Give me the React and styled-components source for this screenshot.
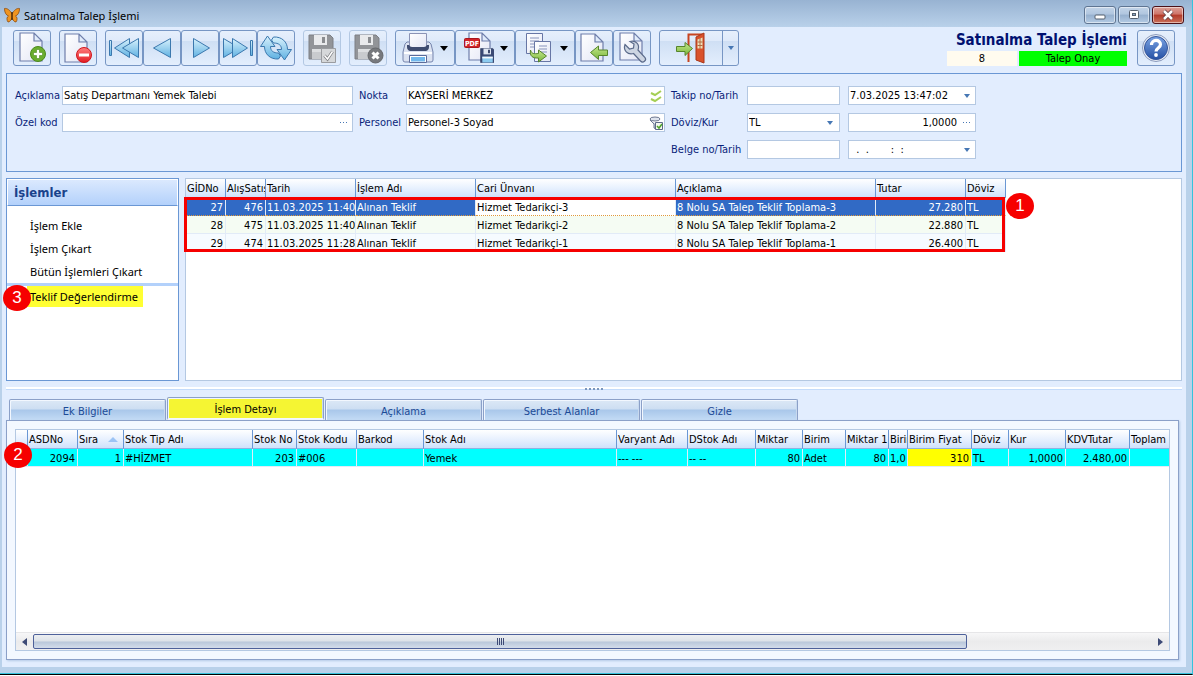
import React from "react";
import styled, { createGlobalStyle } from "styled-components";

const navy = "#0a1f7a";

// Data
const offerColumns = [
  { label: "GİDNo", width: 40, align: "right" },
  { label: "AlışSatış", width: 40, align: "right" },
  { label: "Tarih", width: 90 },
  { label: "İşlem Adı", width: 120 },
  { label: "Cari Ünvanı", width: 200 },
  { label: "Açıklama", width: 200 },
  { label: "Tutar", width: 90, align: "right" },
  { label: "Döviz", width: 40 }
];

const offerRows = [
  ["27", "476", "11.03.2025 11:40", "Alınan Teklif", "Hizmet Tedarikçi-3", "8 Nolu SA Talep Teklif Toplama-3", "27.280", "TL"],
  ["28", "475", "11.03.2025 11:40", "Alınan Teklif", "Hizmet Tedarikçi-2", "8 Nolu SA Talep Teklif Toplama-2", "22.880", "TL"],
  ["29", "474", "11.03.2025 11:28", "Alınan Teklif", "Hizmet Tedarikçi-1", "8 Nolu SA Talep Teklif Toplama-1", "26.400", "TL"]
];

const detailColumns = [
  { label: "", width: 12 },
  { label: "ASDNo", width: 50, align: "right" },
  { label: "Sıra", width: 46, align: "right", sorted: true },
  { label: "Stok Tip Adı", width: 129 },
  { label: "Stok No", width: 44, align: "right" },
  { label: "Stok Kodu", width: 60 },
  { label: "Barkod", width: 67 },
  { label: "Stok Adı", width: 193 },
  { label: "Varyant Adı", width: 71 },
  { label: "DStok Adı", width: 68 },
  { label: "Miktar", width: 47, align: "right" },
  { label: "Birim", width: 43 },
  { label: "Miktar 1", width: 43, align: "right" },
  { label: "Birim", width: 19 },
  { label: "Birim Fiyat", width: 64, align: "right", mark: true },
  { label: "Döviz", width: 37 },
  { label: "Kur", width: 57, align: "right" },
  { label: "KDVTutar", width: 64, align: "right" },
  { label: "Toplam", width: 41 }
];

const detailRow = [
  "", "2094", "1", "#HİZMET", "203", "#006", "", "Yemek", "--- ---", "-- --",
  "80", "Adet", "80", "1,0", "310", "TL", "1,0000", "2.480,00", ""
];

const tabs = ["Ek Bilgiler", "İşlem Detayı", "Açıklama", "Serbest Alanlar", "Gizle"];

// Icons
const Page = ({ x = 3, y = 1, w = 22, h = 28 }) => (
  <path
    d={`M${x} ${y}h${w - 8}l8 8v${h - 8}h-${w}z M${x + w - 8} ${y}v8h8`}
    fill="url(#paper)"
    stroke="#6f7eab"
    strokeWidth="1.2"
  />
);

const Floppy = ({ x = 0, y = 0, scale = 1, dark }) => (
  <g transform={`translate(${x} ${y}) scale(${scale})`}>
    <path d="M1 1h21l3 3v21H1z" fill={dark ? "#3a4a75" : "#929498"} stroke={dark ? "#26345a" : "#7d7f84"} />
    <path d="M6 1h13v10H6z" fill={dark ? "#dfe6f2" : "#e9eaec"} />
    <path d="M14 3h3v6h-3z" fill={dark ? "#26345a" : "#8a8c90"} />
    <path d="M4 15h18v10H4z" fill={dark ? "#8ccbf0" : "#c9cbce"} />
    <path d="M4 15h18v3H4z" fill={dark ? "#f3f7fc" : "#dddfe1"} />
  </g>
);

const GreenArrow = ({ d }) => <path d={d} fill="url(#green)" stroke="#56852c" strokeLinejoin="round" />;

const Svg = ({ children, size = 32 }) => (
  <svg width={size} height={size} viewBox={`0 0 ${size} ${size}`} aria-hidden="true">
    {children}
  </svg>
);

const Gradients = () => (
  <DefsSvg aria-hidden="true">
    <defs>
      <linearGradient id="paper" x2="1" y2="1">
        <stop offset="0" stopColor="#fff" />
        <stop offset="1" stopColor="#e3e6f5" />
      </linearGradient>
      <linearGradient id="blue" x2="0" y2="1">
        <stop offset="0" stopColor="#d8f1fc" />
        <stop offset="1" stopColor="#5fb1e2" />
      </linearGradient>
      <linearGradient id="green" x2="0" y2="1">
        <stop offset="0" stopColor="#c5e88c" />
        <stop offset="1" stopColor="#79b63c" />
      </linearGradient>
      <linearGradient id="red" x2="0" y2="1">
        <stop offset="0" stopColor="#ff7d7d" />
        <stop offset="1" stopColor="#e31b23" />
      </linearGradient>
      <linearGradient id="help" x2="0" y2="1">
        <stop offset="0" stopColor="#7ba4e4" />
        <stop offset="1" stopColor="#2450a4" />
      </linearGradient>
    </defs>
  </DefsSvg>
);

const icons = {
  add: (
    <Svg>
      <Page x={4} />
      <circle cx="22" cy="22" r="7.5" fill="#6aae2e" stroke="#4c8a1e" />
      <path d="M20.5 17.5h3v3h3v3h-3v3h-3v-3h-3v-3h3z" fill="#fff" stroke="#4c8a1e" strokeWidth=".6" />
    </Svg>
  ),
  remove: (
    <Svg>
      <Page x={3} y={2} />
      <circle cx="22" cy="23" r="7.5" fill="url(#red)" stroke="#d0161d" />
      <path d="M17 21.5h10v3H17z" fill="#fff" />
    </Svg>
  ),
  first: (
    <Svg>
      <g fill="url(#blue)" stroke="#3b78ae" strokeLinejoin="round">
        <path d="M1.5 8.5h2v15h-2z" />
        <path d="M21.5 6.5v19L6.5 16z" />
        <path d="M30.5 6.5v19L14.5 16z" />
      </g>
    </Svg>
  ),
  prev: (
    <Svg>
      <path d="M24.5 6.5v19L7.5 16z" fill="url(#blue)" stroke="#3b78ae" strokeLinejoin="round" />
    </Svg>
  ),
  next: (
    <Svg>
      <path d="M9.5 6.5v19L25.5 16z" fill="url(#blue)" stroke="#3b78ae" strokeLinejoin="round" />
    </Svg>
  ),
  last: (
    <Svg>
      <g fill="url(#blue)" stroke="#3b78ae" strokeLinejoin="round">
        <path d="M1.5 6.5v19L17.5 16z" />
        <path d="M10.5 6.5v19L25.5 16z" />
        <path d="M28.5 8.5h2v15h-2z" />
      </g>
    </Svg>
  ),
  refresh: (
    <Svg>
      <g fill="url(#blue)" stroke="#3b78ae" strokeLinejoin="round">
        <path d="M7.5 4L.5 14.5h4C4.5 22 10 27.5 18.5 27l2-3-2-3c-5 0-8-2-8-6.5h4.5z" />
        <path d="M24.5 28l7-10.5h-4C27.5 10 22 4.5 13.5 5l-2 3 2 3c5 0 8 2 8 6.5H17z" />
      </g>
    </Svg>
  ),
  save: (
    <Svg>
      <Floppy x={2} y={2} />
      <path d="M15.5 16.5h14v14h-14z" fill="#d6d8da" stroke="#9a9ca0" />
      <path d="M18.5 23.5l3 3.5 5-7.5" fill="none" stroke="#7c7e82" strokeWidth="3" />
      <path d="M18.5 23.5l3 3.5 5-7.5" fill="none" stroke="#fff" strokeWidth="1.5" />
    </Svg>
  ),
  cancel: (
    <Svg>
      <Floppy x={2} y={2} />
      <circle cx="23.5" cy="23.5" r="7.5" fill="#77797d" stroke="#66686c" />
      <path d="M20.5 20.5l6 6m0-6l-6 6" stroke="#fff" strokeWidth="3" />
    </Svg>
  ),
  print: (
    <Svg>
      <path d="M3 12l2-2h22l2 2 2 8v8q0 2-2 2H3q-2 0-2-2v-8z" fill="#dbe2f1" stroke="#7685ad" />
      <path d="M7.5 1.5h17v14h-17z" fill="url(#paper)" stroke="#8b93b5" />
      <path d="M5 13h2q1 2 3 2h12q2 0 3-2h2v2q0 3-3 4H8q-3-1-3-4z" fill="#3f4c70" />
      <path d="M2 21h28" stroke="#fff" strokeWidth="2" />
      <path d="M7.5 23.5h17v7h-17z" fill="#fff" stroke="#5c6b99" />
      <path d="M9 25h14v4.5H9z" fill="#72b8ec" />
    </Svg>
  ),
  pdf: (
    <Svg>
      <Page x={7} y={1} w={21} h={27} />
      <rect x="2.5" y="6.5" width="15" height="9" rx="1" fill="#d2242a" stroke="#a8161c" />
      <text x="10" y="14" textAnchor="middle" fontSize="7" fontWeight="700" fill="#fff">PDF</text>
      <Floppy x={18} y={16} scale={0.58} dark />
    </Svg>
  ),
  copy: (
    <Svg>
      <path d="M4.5 1.5h16v20h-16z" fill="url(#paper)" stroke="#6776a5" />
      <path d="M8 6h9M8 9h9M8 12h7M8 15h4" stroke="#8793bb" />
      <path d="M12.5 9.5h16v20h-16z" fill="url(#paper)" stroke="#6776a5" />
      <path d="M17 14h8M17 17h8M19 20h6" stroke="#8793bb" />
      <GreenArrow d="M8.5 18c1 4 4 4 8 3.500V18l8 6-8 6v-4c-6 .5-9-2-8-8z" />
    </Svg>
  ),
  back: (
    <Svg>
      <Page x={3} y={2} w={22} h={27} />
      <GreenArrow d="M12.5 20.5l8-6.500v4h9v5.500h-9v4z" />
    </Svg>
  ),
  wrench: (
    <Svg>
      <Page x={4} y={1} w={22} h={27} />
      <path
        d="M9 12.500l4.500 4.500 4-1 .5-4-4-2.500c6-1.500 10 3 8 8.500l7 7.500c2 3-2 6-4.500 3.500l-7-7.500c-6 1.500-10.500-3-8.500-9z"
        fill="#cdd5e2"
        stroke="#5b6a8a"
        strokeWidth="1.2"
      />
    </Svg>
  ),
  exit: (
    <Svg>
      <path d="M13.5 30V2.500h14" fill="none" stroke="#c8441f" strokeWidth="2" />
      <path d="M21 5l8-4v30l-8-3z" fill="#d9512b" stroke="#a9371a" />
      <path d="M22.5 7.500l5-2v11h-5z" fill="#ece0bb" />
      <path d="M25 6v11M22.500 10h5M22.500 13.500h5" stroke="#b3683e" />
      <GreenArrow d="M17.500 16.500l-7.500-6v4H1.500v5H10v4z" transform="none" />
    </Svg>
  ),
  help: (
    <Svg>
      <circle cx="16" cy="16" r="13.5" fill="#e8edf6" stroke="#8b9bbd" />
      <circle cx="16" cy="16" r="11.5" fill="url(#help)" stroke="#34559b" />
      <path d="M11.5 13c0-6 9-6 9-.5 0 3.500-4.500 3.500-4.500 7" fill="none" stroke="#fff" strokeWidth="3.2" />
      <circle cx="16" cy="23" r="1.9" fill="#fff" />
    </Svg>
  )
};

const Butterfly = () => (
  <Svg size={16}>
    <path
      d="M8 7C6 3 3 1 .5 1.500c0 4 1.500 6.500 4 7.500-2 1-2 4-.5 6 2 0 3-2 4-4 1 2 2 4 4 4 1.500-2 1.500-5-.5-6 2.500-1 4-3.500 4-7.500C13 1 10 3 8 7z"
      fill="#ef9420"
      stroke="#8d4a0b"
      strokeWidth=".8"
    />
    <path d="M8 5v8" stroke="#4d2a08" strokeWidth="1.5" />
  </Svg>
);

const DoubleCheck = () => (
  <Svg size={14}>
    <path d="M2 4l4 2 6-4M2 10l4 2 6-4" fill="none" stroke="#a5cf54" strokeWidth="2" />
  </Svg>
);

const FilterCheck = () => (
  <Svg size={14}>
    <ellipse cx="6" cy="3" rx="5" ry="2" fill="#dfe4ee" stroke="#6d7891" />
    <path d="M1 4l4 4v4l2 1V8" fill="#c5cddc" stroke="#6d7891" />
    <path d="M6.5 6.5h7v7h-7z" fill="#f4f8ee" stroke="#5d6a88" />
    <path d="M8 10l2 2 3-4" fill="none" stroke="#4ea32a" strokeWidth="1.5" />
  </Svg>
);

const Triangle = ({ color = "#4677b4", w = 6, h = 4 }) => (
  <svg width={w} height={h} viewBox={`0 0 ${w} ${h}`} aria-hidden="true">
    <path d={`M0 0h${w}L${w / 2} ${h}z`} fill={color} />
  </svg>
);

const DataGrid = ({ columns, children, width }) => (
  <Table $width={width}>
    <colgroup>
      {columns.map((col, i) => (
        <Col key={i} $width={col.width} />
      ))}
    </colgroup>
    <thead>
      <tr>
        {columns.map((col, i) => (
          <HeadCell key={i} scope="col">
            {col.label}
            {col.sorted && (
              <SortMark width="10" height="5" viewBox="0 0 10 5" aria-hidden="true">
                <path d="M5 0l5 5H0z" fill="#9cc4f5" />
              </SortMark>
            )}
          </HeadCell>
        ))}
      </tr>
    </thead>
    <tbody>{children}</tbody>
  </Table>
);

const ToolButton = ({ icon, label, menu, disabled }) => (
  <StyledToolButton type="button" aria-label={label} $menu={menu} disabled={disabled}>
    {icons[icon]}
    {menu && <Triangle color="#000" w={8} h={5} />}
  </StyledToolButton>
);

export default function App() {
  return (
    <Window>
      <GlobalStyle />
      <Gradients />
      <TitleBar>
        <Butterfly />
        <WindowTitle>Satınalma Talep İşlemi</WindowTitle>
        <WindowButton type="button" aria-label="Küçült">
          <svg width="12" height="12" viewBox="0 0 12 12">
            <rect x="1" y="6" width="10" height="4" rx="1" fill="#fff" stroke="#55606e" />
          </svg>
        </WindowButton>
        <WindowButton type="button" aria-label="Büyüt">
          <svg width="12" height="12" viewBox="0 0 12 12">
            <rect x="1.5" y="1.5" width="9" height="8" rx="1" fill="#fff" stroke="#55606e" />
            <rect x="4.5" y="4.5" width="3" height="2" fill="#8ba6c4" stroke="#55606e" />
          </svg>
        </WindowButton>
        <WindowButton type="button" aria-label="Kapat" $close>
          <svg width="12" height="12" viewBox="0 0 12 12">
            <path d="M2 2l8 8M10 2l-8 8" stroke="#5c3a3e" strokeWidth="4" />
            <path d="M2 2l8 8M10 2l-8 8" stroke="#fff" strokeWidth="2.5" />
          </svg>
        </WindowButton>
      </TitleBar>

      <Client>
        <Toolbar>
          <ToolButton icon="add" label="Yeni" />
          <ToolButton icon="remove" label="Sil" />
          <ToolGroup>
            <ToolButton icon="first" label="İlk kayıt" />
            <ToolButton icon="prev" label="Önceki kayıt" />
            <ToolButton icon="next" label="Sonraki kayıt" />
            <ToolButton icon="last" label="Son kayıt" />
            <ToolButton icon="refresh" label="Yenile" />
          </ToolGroup>
          <ToolButton icon="save" label="Kaydet" disabled />
          <ToolButton icon="cancel" label="Vazgeç" disabled />
          <ToolGroup>
            <ToolButton icon="print" label="Yazdır" menu />
            <ToolButton icon="pdf" label="PDF kaydet" menu />
            <ToolButton icon="copy" label="Kopyala" menu />
            <ToolButton icon="back" label="Aktar" />
            <ToolButton icon="wrench" label="Ayarlar" />
          </ToolGroup>
          <ExitGroup>
            <ExitButton type="button" aria-label="Çıkış">{icons.exit}</ExitButton>
            <ExitMenuButton type="button" aria-label="Çıkış seçenekleri">
              <Triangle />
            </ExitMenuButton>
          </ExitGroup>
          <Status>
            <StatusTitle>Satınalma Talep İşlemi</StatusTitle>
            <StatusNo>8</StatusNo>
            <StatusState>Talep Onay</StatusState>
          </Status>
          <ToolButton icon="help" label="Yardım" />
        </Toolbar>

        <FormPanel>
          <Label htmlFor="aciklama">Açıklama</Label>
          <Field>
            <Input id="aciklama" defaultValue="Satış Departmanı Yemek Talebi" />
          </Field>
          <Label htmlFor="nokta" $indent>Nokta</Label>
          <Field>
            <Input id="nokta" defaultValue="KAYSERİ MERKEZ" />
            <FieldButton type="button" aria-label="Nokta seç"><DoubleCheck /></FieldButton>
          </Field>
          <Label htmlFor="takip" $indent>Takip no/Tarih</Label>
          <Field>
            <Input id="takip" />
          </Field>
          <Field>
            <Input aria-label="Tarih" defaultValue="7.03.2025 13:47:02" />
            <FieldButton type="button" aria-label="Tarih seç"><Triangle /></FieldButton>
          </Field>

          <Label htmlFor="ozelkod">Özel kod</Label>
          <Field>
            <Input id="ozelkod" />
            <FieldButton type="button" aria-label="Özel kod seç"><Dots /></FieldButton>
          </Field>
          <Label htmlFor="personel" $indent>Personel</Label>
          <Field>
            <Input id="personel" defaultValue="Personel-3 Soyad" />
            <FieldButton type="button" aria-label="Personel seç"><FilterCheck /></FieldButton>
          </Field>
          <Label htmlFor="doviz" $indent>Döviz/Kur</Label>
          <Field>
            <Select id="doviz" defaultValue="TL">
              <option>TL</option>
            </Select>
            <SelectArrow><Triangle /></SelectArrow>
          </Field>
          <Field>
            <Input aria-label="Kur" defaultValue="1,0000" $align="right" />
            <FieldButton type="button" aria-label="Kur seç"><Dots /></FieldButton>
          </Field>

          <BelgeLabel htmlFor="belge" $indent>Belge no/Tarih</BelgeLabel>
          <Field>
            <Input id="belge" />
          </Field>
          <Field>
            <Input aria-label="Belge tarihi" defaultValue="  .  .       :  :" />
            <FieldButton type="button" aria-label="Belge tarihi seç"><Triangle /></FieldButton>
          </Field>
        </FormPanel>

        <Middle>
          <Sidebar>
            <SidebarTitle>İşlemler</SidebarTitle>
            <SidebarList>
              <SidebarItem type="button">İşlem Ekle</SidebarItem>
              <SidebarItem type="button">İşlem Çıkart</SidebarItem>
              <SidebarItem type="button">Bütün İşlemleri Çıkart</SidebarItem>
            </SidebarList>
            <SidebarRule />
            <MarkedItem type="button">Teklif Değerlendirme</MarkedItem>
            <Callout $left={-4} $top={106}>3</Callout>
          </Sidebar>
          <OfferPanel>
            <DataGrid columns={offerColumns} width={820}>
              {offerRows.map((row, r) => (
                <OfferRow key={row[0]} $selected={r === 0}>
                  {row.map((cell, c) => (
                    <Cell key={c} $align={offerColumns[c].align} $focused={r === 0 && c === 4}>
                      {cell}
                    </Cell>
                  ))}
                </OfferRow>
              ))}
            </DataGrid>
            <RedFrame />
            <Callout $left={820} $top={14}>1</Callout>
          </OfferPanel>
        </Middle>

        <Splitter>
          <i /><i /><i /><i /><i />
        </Splitter>

        <TabBar role="tablist">
          {tabs.map(tab => (
            <Tab key={tab} type="button" role="tab" aria-selected={tab === "İşlem Detayı"}>
              {tab}
            </Tab>
          ))}
        </TabBar>
        <TabPanel role="tabpanel">
          <DetailGrid>
            <DetailScroll>
              <DataGrid columns={detailColumns} width={1155}>
                <DetailRow>
                  {detailRow.map((cell, c) => (
                    <Cell key={c} $align={detailColumns[c].align} $mark={detailColumns[c].mark}>
                      {cell}
                    </Cell>
                  ))}
                </DetailRow>
              </DataGrid>
            </DetailScroll>
            <ScrollBar>
              <ScrollArrow type="button" aria-label="Sola kaydır">
                <svg width="5" height="8" viewBox="0 0 5 8"><path d="M5 0v8L0 4z" fill="#3d4a76" /></svg>
              </ScrollArrow>
              <ScrollTrack>
                <ScrollThumb><i /><i /><i /><i /></ScrollThumb>
              </ScrollTrack>
              <ScrollArrow type="button" aria-label="Sağa kaydır">
                <svg width="5" height="8" viewBox="0 0 5 8"><path d="M0 0v8l5-4z" fill="#3d4a76" /></svg>
              </ScrollArrow>
            </ScrollBar>
          </DetailGrid>
          <Callout $left={-3} $top={21}>2</Callout>
        </TabPanel>
      </Client>
    </Window>
  );
}

const GlobalStyle = createGlobalStyle`
  * {
    box-sizing: border-box;
  }
  body {
    margin: 0;
    background: #fff;
  }
  body, button, input, select {
    font-family: Tahoma, "DejaVu Sans Condensed", "Noto Sans", sans-serif;
    font-size: 11px;
    color: #000;
  }
  button {
    padding: 0;
    border: none;
    background: none;
  }
  svg {
    display: block;
    flex: none;
  }
`;

const DefsSvg = styled.svg`
  position: absolute;
  width: 0;
  height: 0;
`;

// Window frame
const Window = styled.div`
  display: flex;
  flex-direction: column;
  height: calc(100vh - 1px);
  min-height: 600px;
  padding: 0 6px 7px 2px;
  background: #b9d1ea;
  border-right: 1px solid #35c3dc;
  border-bottom: 1px solid #000;
  box-shadow: inset 0 -1px #35c3dc;
`;

const TitleBar = styled.header`
  display: flex;
  align-items: center;
  gap: 2px;
  height: 27px;
  flex: none;
  margin: 0 -6px 0 -2px;
  padding: 3px 8px 0 4px;
  background: linear-gradient(#98b3d2, #b9d1ea);
`;

const WindowTitle = styled.h1`
  flex: 1;
  margin: 0;
  padding-left: 2px;
  font: 400 11px "Noto Sans", sans-serif;
`;

const WindowButton = styled.button`
  display: flex;
  align-items: center;
  justify-content: center;
  width: 32px;
  height: 18px;
  border: 1px solid ${props => (props.$close ? "#4b1018" : "#5f7592")};
  border-radius: 3px;
  box-shadow: inset 0 0 0 1px rgba(255, 255, 255, 0.5);
  background: ${props =>
    props.$close
      ? "linear-gradient(#dba29a 0, #cf7468 45%, #b33a29 50%, #c9705a)"
      : "linear-gradient(#c3d4e8 0, #b0c6df 45%, #96b0ce 50%, #b4cbe4)"};
`;

const Client = styled.main`
  display: flex;
  flex-direction: column;
  flex: 1;
  min-height: 0;
  background: #e2edfe;
`;

// Toolbar
const Toolbar = styled.div`
  display: flex;
  gap: 8px;
  padding: 3px 11px 7px;
`;

const ToolGroup = styled.div`
  display: flex;
`;

const StyledToolButton = styled.button`
  display: flex;
  align-items: center;
  justify-content: center;
  gap: 6px;
  width: ${props => (props.$menu ? 60 : 38)}px;
  height: 36px;
  flex: none;
  border: 1px solid #7796c4;
  border-radius: 3px;
  background: linear-gradient(#e6effc 0, #dfeafa 28%, #cfdff4 30%, #e3eefd);
  &:disabled {
    border-color: #b3c8e3;
  }
`;

const ExitGroup = styled.div`
  display: flex;
  height: 36px;
  border: 1px solid #7796c4;
  border-radius: 3px;
  background: linear-gradient(#e6effc 0, #dfeafa 28%, #cfdff4 30%, #e3eefd);
`;

const ExitButton = styled.button`
  display: flex;
  align-items: center;
  justify-content: center;
  width: 62px;
`;

const ExitMenuButton = styled(ExitButton)`
  width: 16px;
  border-left: 1px solid #7796c4;
`;

const Status = styled.div`
  display: grid;
  grid-template-columns: 70px 108px;
  grid-template-rows: 21px 15px;
  column-gap: 2px;
  margin-left: auto;
  margin-right: 2px;
  text-align: center;
  line-height: 15px;
`;

const StatusTitle = styled.h2`
  grid-column: 1 / -1;
  margin: 0;
  text-align: right;
  white-space: nowrap;
  font-size: 15px;
  line-height: 21px;
  color: #001070;
`;

const StatusNo = styled.span`
  background: #fffbef;
`;

const StatusState = styled.span`
  background: #00ff00;
`;

// Form
const FormPanel = styled.form`
  display: grid;
  grid-template-columns: 47px 291px 53px 259px 82px 93px 136px;
  grid-auto-rows: 19px;
  row-gap: 8px;
  margin: 0 4px;
  padding: 12px 8px;
  border: 1px solid #6a97d4;
`;

const Label = styled.label`
  padding-left: ${props => (props.$indent ? 6 : 0)}px;
  color: ${navy};
  line-height: 19px;
  white-space: nowrap;
`;

const BelgeLabel = styled(Label)`
  grid-column: 5;
`;

const Field = styled.div`
  display: flex;
  position: relative;
  border: 1px solid #b4c8e2;
  background: #fff;
  & + & {
    margin-left: 8px;
  }
`;

const Input = styled.input`
  flex: 1;
  min-width: 0;
  padding: 0 1px;
  border: none;
  outline: none;
  background: none;
  text-align: ${props => props.$align || "left"};
`;

const Select = styled.select`
  flex: 1;
  padding: 0 1px;
  border: none;
  outline: none;
  appearance: none;
  background: none;
`;

const FieldButton = styled.button`
  display: flex;
  align-items: center;
  justify-content: center;
  width: 17px;
`;

const SelectArrow = styled.span`
  position: absolute;
  right: 6px;
  top: 7px;
  pointer-events: none;
`;

const Dots = styled.span`
  width: 8px;
  height: 1px;
  background: repeating-linear-gradient(90deg, #4677b4 0 1px, transparent 1px 3px);
`;

// Middle
const Middle = styled.section`
  display: flex;
  gap: 6px;
  height: 203px;
  flex: none;
  margin: 6px 4px 0;
`;

const Sidebar = styled.nav`
  position: relative;
  width: 173px;
  flex: none;
  border: 1px solid #6a97d4;
  background: #fff;
`;

const SidebarTitle = styled.h3`
  height: 27px;
  margin: 0;
  padding-left: 6px;
  border: 1px solid #fff;
  border-bottom: 1px solid #6a97d4;
  background: linear-gradient(#dbe9fe, #b3d1fb);
  font-size: 13px;
  line-height: 25px;
  color: #1a428b;
`;

const SidebarList = styled.div`
  padding: 8px 0 0;
`;

const SidebarItem = styled.button`
  display: block;
  width: 100%;
  height: 23px;
  padding-left: 23px;
  text-align: left;
  font-family: "Noto Sans", sans-serif;
`;

const SidebarRule = styled.hr`
  height: 3px;
  margin: 0;
  border: none;
  background: #b3d1fb;
`;

const MarkedItem = styled(SidebarItem)`
  width: 116px;
  height: 21px;
  margin-left: 20px;
  padding-left: 3px;
  background: #ffff33;
  white-space: nowrap;
`;

const OfferPanel = styled.div`
  position: relative;
  flex: 1;
  min-width: 0;
  border: 1px solid #b4c8e2;
  background: #fff;
`;

const RedFrame = styled.div`
  position: absolute;
  left: -2px;
  top: 18px;
  width: 821px;
  height: 55px;
  border: 3px solid #f60000;
  pointer-events: none;
`;

const Callout = styled.span`
  position: absolute;
  left: ${props => props.$left}px;
  top: ${props => props.$top}px;
  width: 28px;
  height: 26px;
  border-radius: 50%;
  background: #f60000;
  color: #fff;
  font: 17px/26px "Liberation Sans", sans-serif;
  text-align: center;
`;

// Grids
const Table = styled.table`
  width: ${props => props.$width}px;
  table-layout: fixed;
  border-collapse: separate;
  border-spacing: 0;
`;

const Col = styled.col`
  width: ${props => props.$width}px;
`;

const HeadCell = styled.th`
  position: relative;
  height: 19px;
  padding: 0 0 0 1px;
  overflow: hidden;
  border-right: 1px solid #6a97d4;
  border-bottom: 1px solid #8fb1e0;
  background: linear-gradient(#fff, #e8f1fe 50%, #cfe1fb);
  text-align: left;
  font-weight: 400;
  white-space: nowrap;
`;

const SortMark = styled.svg`
  position: absolute;
  right: 5px;
  top: 7px;
`;

const Cell = styled.td`
  height: 18px;
  padding: 1px 2px 0 1px;
  overflow: hidden;
  border-right: 1px solid #e2ebf7;
  border-bottom: 1px solid #e2ebf7;
  text-align: ${props => props.$align || "left"};
  white-space: nowrap;
  ${props => props.$focused && "background: #fff; color: #000;"}
  ${props => props.$mark && "background: #ffff00;"}
`;

const OfferRow = styled.tr`
  background: ${props => (props.$selected ? "#316ac5" : "#f6fbff")};
  color: ${props => (props.$selected ? "#fff" : "#000")};
  &:nth-child(2) {
    background: #f5fcf3;
  }
  ${Cell} {
    ${props => props.$selected && "border-bottom: 1px dotted #e09a3c;"}
  }
`;

const DetailRow = styled.tr`
  background: #00ffff;
`;

const Splitter = styled.div`
  display: flex;
  justify-content: center;
  gap: 2px;
  height: 16px;
  flex: none;
  margin: 0 4px;
  padding-top: 7px;
  background: linear-gradient(transparent 6px, #fff 6px 8px, #c3dbfb 8px 9px, transparent 9px);
  i {
    width: 2px;
    height: 2px;
    background: #7b96bd;
  }
`;

// Tabs
const TabBar = styled.div`
  display: flex;
  align-items: flex-end;
  gap: 1px;
  height: 23px;
  flex: none;
  margin: 0 7px;
`;

const Tab = styled.button`
  width: 157px;
  height: 21px;
  padding-top: 2px;
  border: 1px solid #8ba0c8;
  border-bottom: none;
  border-radius: 2px 2px 0 0;
  box-shadow: inset 1px 1px #f2f7fe, inset -1px 0 #c8d9ee;
  background: linear-gradient(#dce8f6 0, #cddef2 45%, #a9c7ea 50%, #c3dbf5);
  color: #1b4a96;
  &[aria-selected="true"] {
    height: 23px;
    border-bottom: 2px solid #f3f8ff;
    background: #f5f533;
    color: #000;
  }
`;

const TabPanel = styled.section`
  position: relative;
  display: flex;
  flex: 1;
  min-height: 0;
  margin: 0 7px 7px 4px;
  padding: 8px;
  border: 1px solid #8ba0c8;
  box-shadow: 1px 1px 2px #b5cbe6;
  background: #f3f8ff;
`;

const DetailGrid = styled.div`
  display: flex;
  flex-direction: column;
  flex: 1;
  min-width: 0;
  border: 1px solid #b4c8e2;
  background: #fff;
`;

const DetailScroll = styled.div`
  flex: 1;
  overflow: hidden;
`;

const ScrollBar = styled.div`
  display: flex;
  height: 18px;
  padding: 1px 0;
  border-top: 1px solid #e6e6e8;
  background: linear-gradient(#f7f7f8, #ebebec 50%, #efeff0);
`;

const ScrollArrow = styled.button`
  display: flex;
  align-items: center;
  justify-content: center;
  width: 17px;
`;

const ScrollTrack = styled.div`
  flex: 1;
`;

const ScrollThumb = styled.div`
  display: flex;
  align-items: center;
  justify-content: center;
  gap: 1px;
  width: calc(100% - 185px);
  height: 15px;
  border: 1px solid #4e619a;
  border-radius: 2px;
  background: linear-gradient(#eceef1, #dde2e8 48%, #b9c7da 52%, #d3dcea);
  i {
    width: 1px;
    height: 7px;
    background: #3d4a76;
  }
`;
